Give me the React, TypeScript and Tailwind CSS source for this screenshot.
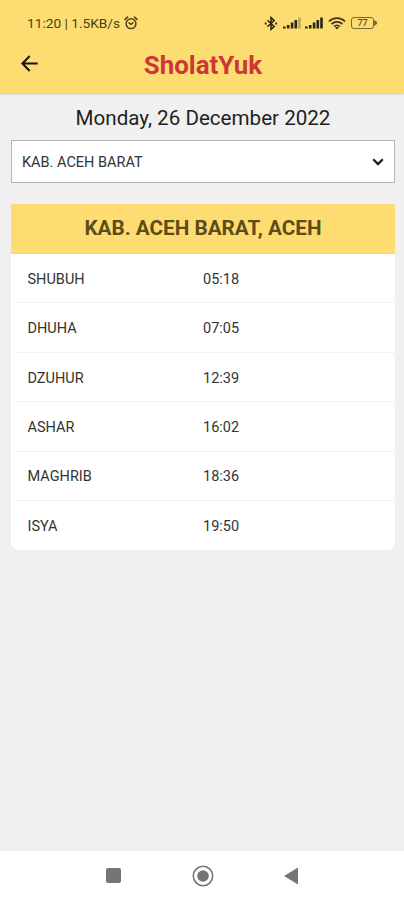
import React from "react";

const times: [string, string][] = [
  ["SHUBUH", "05:18"],
  ["DHUHA", "07:05"],
  ["DZUHUR", "12:39"],
  ["ASHAR", "16:02"],
  ["MAGHRIB", "18:36"],
  ["ISYA", "19:50"],
];

function AlarmIcon() {
  return (
    <svg className="ml-[3px] h-[14px] w-[14px]" viewBox="0 0 14 14" fill="none" stroke="#4a3f1c" strokeWidth="1.5" strokeLinecap="round">
      <circle cx="7" cy="7.7" r="4.9" />
      <path d="M1 3.4 3.6 1.1M13 3.4 10.4 1.1M5 6.9 7 8.4 9 6.9" />
    </svg>
  );
}

function BluetoothIcon() {
  return (
    <svg className="h-[15px] w-[14px]" viewBox="0 0 14 15" fill="none" stroke="#2b2511" strokeWidth="1.5">
      <path d="M3.4 4.2 10.2 10.4 7 13.4V1.6l3.2 3L3.4 10.8" />
      <path d="M.7 7.5h1.8M11.3 7.5h1.8" strokeWidth="1.8" />
    </svg>
  );
}

function SignalIcon({ weak }: { weak?: boolean }) {
  return (
    <svg className="h-[12px] w-[18px]" viewBox="0 0 18 12" fill="#2b2511">
      <rect x="0" y="9.5" width="2.6" height="2" />
      <rect x="3.9" y="8" width="2.6" height="3.5" />
      <rect x="7.8" y="5.5" width="2.6" height="6" />
      <rect x="11.5" y="3" width="2.6" height="8.5" />
      <rect x="15.2" y="0.5" width="2.6" height="11" opacity={weak ? 0.3 : 1} />
    </svg>
  );
}

function WifiIcon() {
  return (
    <svg className="h-[13px] w-[18px]" viewBox="0 0 18 13" fill="none" stroke="#3b3218" strokeWidth="1.7">
      <path d="M.9 4.5C5.4.1 12.6.1 17.1 4.5M3.5 7.1c3-3 8-3 11 0M6 9.5c1.7-1.7 4.3-1.7 6 0" />
      <path d="M9 12.6 7 10.5c1-1 3-1 4 0Z" fill="#3b3218" stroke="none" />
    </svg>
  );
}

function Battery() {
  return (
    <div className="flex items-center">
      <div className="flex h-[12px] w-[23px] items-center justify-center rounded-[3px] border border-[#75683a] text-[9px] leading-none font-medium text-[#5b502b]">
        77
      </div>
      <svg className="h-[6px] w-[3px]" viewBox="0 0 3 6" fill="#75683a">
        <path d="M0 0 3 2v2L0 6Z" />
      </svg>
    </div>
  );
}

export default function App() {
  return (
    <div className="flex h-[900px] w-full flex-col overflow-hidden bg-[#f0f0f0] font-['Roboto',sans-serif] text-[#252525]">
      <header className="flex h-[93px] shrink-0 flex-col bg-[#fddd72] shadow-[0_1px_2px_rgba(0,0,0,0.18)]">
        <div className="flex h-[46px] items-center justify-between pr-[27px] pl-[27px]">
          <div className="flex items-center text-[13.7px] leading-none text-[#4a3f1c]">
            <span className="w-[94px] pt-[2px] whitespace-nowrap">11:20 | 1.5KB/s</span>
            <AlarmIcon />
          </div>
          <div className="flex items-center">
            <BluetoothIcon />
            <div className="ml-[5px] flex gap-[4px]">
              <SignalIcon weak />
              <SignalIcon />
            </div>
            <div className="mr-[5px] ml-[5px]">
              <WifiIcon />
            </div>
            <Battery />
          </div>
        </div>
        <div className="grid h-[38px] grid-cols-[60px_1fr_60px] items-center">
          <svg className="mb-[3px] ml-[21px] h-[17px] w-[17px]" viewBox="0 0 17 17" fill="none" stroke="#17150c" strokeWidth="2">
            <path d="M16.7 8.5H2M8.7 1 1.4 8.5 8.7 16" />
          </svg>
          <h1 className="pt-[1px] pl-[2px] text-center text-[25.9px] leading-none font-bold text-[#cc3837]">SholatYuk</h1>
        </div>
      </header>

      <main className="flex flex-1 flex-col pr-[9px] pl-[11px]">
        <p className="mt-[11px] text-center text-[20.6px] leading-[28px] whitespace-nowrap text-[#1f1f1f]">Monday, 26 December 2022</p>
        <button className="mt-[8px] flex h-[43px] items-center justify-between border border-[#b5b5b5] bg-white pr-[10px] pl-[10px]">
          <span className="pt-[3px] text-[14.5px] text-[#333]">KAB. ACEH BARAT</span>
          <svg className="h-[8px] w-[12px]" viewBox="0 0 12 8" fill="none" stroke="#1c1c1c" strokeWidth="2.2">
            <path d="m1.2 1.3 4.8 4.8 4.8-4.8" />
          </svg>
        </button>

        <section className="mt-[21px] flex flex-col overflow-hidden rounded-b-[8px] bg-white">
          <h2 className="flex h-[50px] items-center justify-center border-b border-[#f2d67b] bg-[#fddd72] pt-[1px] text-[20.7px] font-bold text-[#5d4c19]">
            KAB. ACEH BARAT, ACEH
          </h2>
          <div className="flex flex-col divide-y divide-[#f3f3f3] pl-[5px]">
            {times.map(([name, time]) => (
              <div key={name} className="grid h-[49.4px] grid-cols-[175.5px_1fr] items-center pt-[3px] pl-[11.5px] text-[14.5px] text-[#333]">
                <span>{name}</span>
                <span>{time}</span>
              </div>
            ))}
          </div>
        </section>
      </main>

      <nav className="flex h-[49px] shrink-0 items-center bg-white pl-[106px]">
        <div className="h-[15px] w-[15px] rounded-[2px] bg-[#757575]" />
        <svg className="ml-[71px] h-[22px] w-[22px]" viewBox="0 0 22 22">
          <circle cx="11" cy="11" r="9.7" fill="none" stroke="#777" strokeWidth="1.6" />
          <circle cx="11" cy="11" r="5.8" fill="#757575" />
        </svg>
        <svg className="ml-[70px] h-[18px] w-[14px]" viewBox="0 0 14 18" fill="#757575">
          <path d="M0 9 14 0.5v17Z" />
        </svg>
      </nav>
    </div>
  );
}
